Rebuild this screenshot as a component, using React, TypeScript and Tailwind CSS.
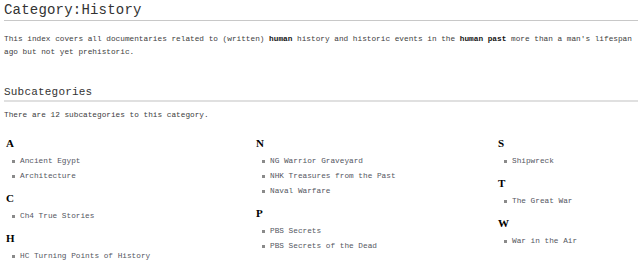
const columns = [
  {
    groups: [
      { letter: 'A', items: ['Ancient Egypt', 'Architecture'] },
      { letter: 'C', items: ['Ch4 True Stories'] },
      { letter: 'H', items: ['HC Turning Points of History'] },
    ],
  },
  {
    groups: [
      { letter: 'N', items: ['NG Warrior Graveyard', 'NHK Treasures from the Past', 'Naval Warfare'] },
      { letter: 'P', items: ['PBS Secrets', 'PBS Secrets of the Dead'] },
    ],
  },
  {
    groups: [
      { letter: 'S', items: ['Shipwreck'] },
      { letter: 'T', items: ['The Great War'] },
      { letter: 'W', items: ['War in the Air'] },
    ],
  },
]

export default function App() {
  return (
    <div className="w-[640px] h-[269px] overflow-hidden bg-white text-[#3d3d3d] pl-[4px] pr-[2px] font-['Liberation_Mono','Cousine',monospace]">
      {/* Title */}
      <h1 className="text-[14px] leading-[19px] pt-[1px] tracking-[0.2px] text-[#333] border-b border-[#c8c8c8]">
        Category:History
      </h1>

      <p className="mt-[12px] text-[7.75px] leading-[13px]">
        This index covers all documentaries related to (written){' '}
        <b className="inline-block text-[#111]">human</b> history and historic events in the{' '}
        <b className="inline-block text-[#111]">human past</b> more than a man's lifespan ago but not yet
        prehistoric.
      </p>

      {/* Subcategories */}
      <h2 className="mt-[26px] text-[11px] leading-[15px] tracking-[0.2px] text-[#333] border-b-2 border-[#e0e0e0]">
        Subcategories
      </h2>
      <p className="mt-[7px] text-[7.75px] leading-[13px]">
        There are 12 subcategories to this category.
      </p>

      <div className="mt-[14px] grid grid-cols-[250px_242px_1fr]">
        {columns.map((col, i) => (
          <div key={i} className="flex flex-col">
            {col.groups.map((g, j) => (
              <div key={g.letter} className={j > 0 ? 'mt-[7px]' : ''}>
                <h3 className="pl-[2px] text-[11px] leading-[14px] font-bold text-black font-['Liberation_Serif',serif]">
                  {g.letter}
                </h3>
                <ul className="mt-[4px]">
                  {g.items.map(item => (
                    <li key={item} className="flex items-center pl-[8px] h-[15px]">
                      <span className="w-[3px] h-[3px] bg-[#8a8a8a] mr-[5px]" />
                      <span className="text-[7.75px] text-[#55575f]">{item}</span>
                    </li>
                  ))}
                </ul>
              </div>
            ))}
          </div>
        ))}
      </div>
    </div>
  )
}
